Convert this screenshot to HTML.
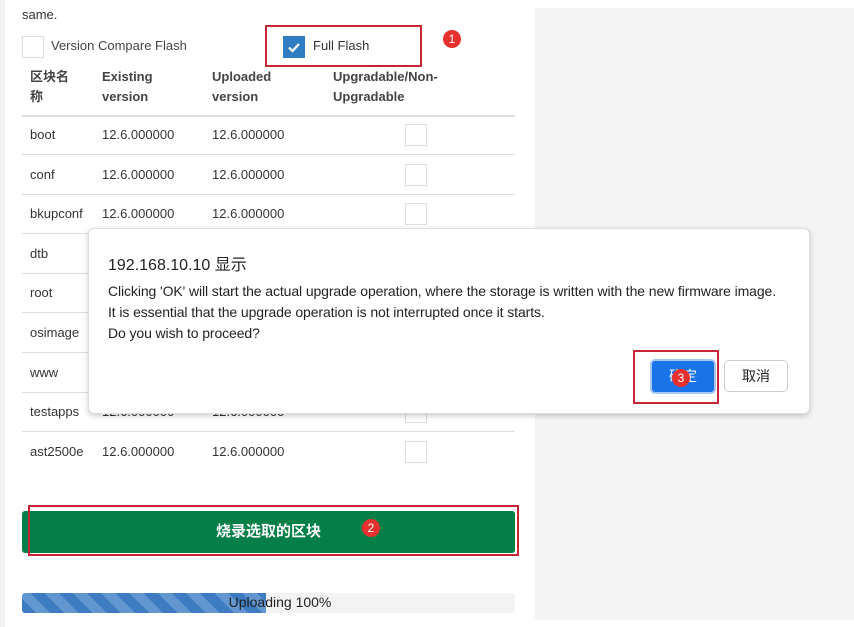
<html><head><style>
body{margin:0;width:854px;height:627px;background:#fff;font-family:"Liberation Sans","Noto Sans CJK SC",sans-serif;position:relative;overflow:hidden;color:#333}
.a{position:absolute}
.t{font-size:13px;color:#333}
.cb{position:absolute;width:20px;height:20px;border:1px solid #ddd;background:#fff}
.line{position:absolute;left:22px;width:493px;height:1px;background:#ddd}
</style></head><body>
<div class="a" style="left:0;top:0;width:5px;height:627px;background:#f2f2f2"></div>
<div class="a" style="left:535px;top:8px;width:319px;height:612px;background:#f4f4f4"></div>
<div class="a t" style="left:22px;top:7px">same.</div>
<div class="cb" style="left:22px;top:36px"></div>
<div class="a t" style="left:51px;top:38px;color:#444">Version Compare Flash</div>
<div class="a" style="left:283px;top:36px;width:22px;height:22px;background:#2f7ec4"><svg width="22" height="22"><path d="M6 11.5l3.5 3.5 6.5-7" stroke="#fff" stroke-width="2.2" fill="none"/></svg></div>
<div class="a t" style="left:313px;top:38px">Full Flash</div>
<div class="a" style="left:265px;top:25px;width:153px;height:38px;border:2px solid #c82433"></div>
<div class="a" style="left:443px;top:30px;width:18px;height:18px;border-radius:50%;background:#e8312f;color:#fff;font-size:12px;text-align:center;line-height:18px">1</div>
<div class="a t" style="left:30px;top:67px;font-weight:bold;line-height:20px;width:50px;color:#444">区块名<br>称</div>
<div class="a t" style="left:102px;top:67px;font-weight:bold;line-height:20px;color:#444">Existing<br>version</div>
<div class="a t" style="left:212px;top:67px;font-weight:bold;line-height:20px;color:#444">Uploaded<br>version</div>
<div class="a t" style="left:333px;top:67px;font-weight:bold;line-height:20px;color:#444">Upgradable/Non-<br>Upgradable</div>
<div class="line" style="top:115px;height:2px"></div>
<div class="line" style="top:154px"></div><div class="line" style="top:194px"></div><div class="line" style="top:233px"></div><div class="line" style="top:273px"></div><div class="line" style="top:312px"></div><div class="line" style="top:352px"></div><div class="line" style="top:392px"></div><div class="line" style="top:431px"></div>
<div class="a t" style="left:30px;top:115px;line-height:39.6px">
boot<br>conf<br>bkupconf<br>dtb<br>root<br>osimage<br>www<br>testapps<br>ast2500e</div>
<div class="a t" style="left:102px;top:115px;line-height:39.6px">12.6.000000<br>12.6.000000<br>12.6.000000<br><br><br><br><br>12.6.000000<br>12.6.000000</div>
<div class="a t" style="left:212px;top:115px;line-height:39.6px">12.6.000000<br>12.6.000000<br>12.6.000000<br><br><br><br><br>12.6.000000<br>12.6.000000</div>
<div class="cb" style="left:405px;top:124px"></div><div class="cb" style="left:405px;top:164px"></div><div class="cb" style="left:405px;top:203px"></div><div class="cb" style="left:405px;top:401px"></div><div class="cb" style="left:405px;top:441px"></div>
<div class="a" style="left:22px;top:511px;width:493px;height:42px;background:#037f47;border-radius:3px;color:#fff;font-size:15px;font-weight:bold;text-align:center;line-height:42px">烧录选取的区块</div>
<div class="a" style="left:28px;top:505px;width:491px;height:51px;border:2px solid #c82433;box-sizing:border-box"></div>
<div class="a" style="left:362px;top:519px;width:18px;height:18px;border-radius:50%;background:#e8312f;color:#fff;font-size:12px;text-align:center;line-height:18px">2</div>
<div class="a" style="left:22px;top:593px;width:493px;height:20px;background:#f3f3f3;border-radius:3px;overflow:hidden"><div style="width:244px;height:20px;background:repeating-linear-gradient(45deg,#3d7cc0 0 10px,#6196d0 10px 20px)"></div></div>
<div class="a" style="left:22px;top:594px;width:516px;text-align:center;font-size:14px;color:#222">Uploading 100%</div>
<div class="a" style="left:88px;top:228px;width:720px;height:184px;background:#fff;border:1px solid #ddd;border-radius:6px;box-shadow:0 2px 6px rgba(0,0,0,.2)"></div>
<div class="a" style="left:108px;top:251px;font-size:16px;color:#222">192.168.10.10 显示</div>
<div class="a" style="left:108px;top:281px;font-size:14px;color:#222;line-height:21px;letter-spacing:-.1px;white-space:nowrap">Clicking 'OK' will start the actual upgrade operation, where the storage is written with the new firmware image.<br>It is essential that the upgrade operation is not interrupted once it starts.<br>Do you wish to proceed?</div>
<div class="a" style="left:650px;top:359px;width:66px;height:35px;background:#1a73e8;border:2px solid #a6c8f5;box-sizing:border-box;border-radius:5px;color:#fff;font-size:14px;text-align:center;line-height:31px">确定</div>
<div class="a" style="left:724px;top:360px;width:64px;height:32px;border:1px solid #ccc;border-radius:5px;box-sizing:border-box;font-size:14px;text-align:center;line-height:30px;color:#222">取消</div>
<div class="a" style="left:633px;top:350px;width:86px;height:54px;border:2px solid #c82433;box-sizing:border-box"></div>
<div class="a" style="left:672px;top:369px;width:18px;height:18px;border-radius:50%;background:#e8312f;color:#fff;font-size:12px;text-align:center;line-height:18px">3</div>
</body></html>
